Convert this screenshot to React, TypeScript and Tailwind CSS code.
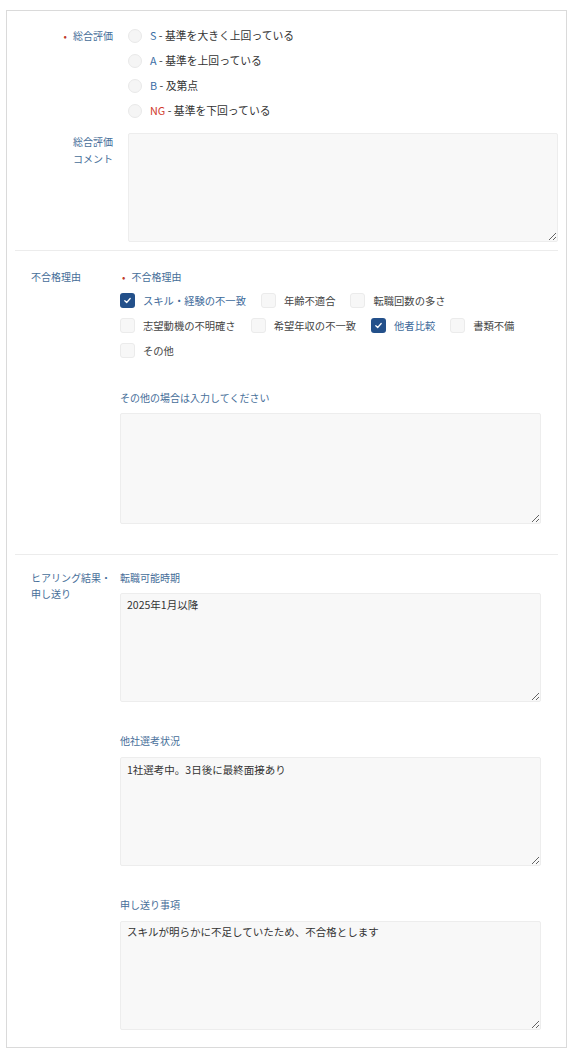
const FONT = "font-['Noto_Sans_CJK_JP','Noto_Sans',sans-serif]";

function Radio({ code, codeClass, text }: { code: string; codeClass: string; text: string }) {
  return (
    <div className="flex h-[25px] items-center">
      <span className="h-[14px] w-[14px] rounded-full border border-[#e9e9e9] bg-[#f5f5f5]" />
      <span className="ml-[8px] text-[10.8px] text-[#333]">
        <span className={codeClass}>{code}</span> - {text}
      </span>
    </div>
  );
}

function Check({ label, checked = false }: { label: string; checked?: boolean }) {
  return (
    <div className="mr-[15px] flex h-[25px] items-center">
      {checked ? (
        <span className="flex h-[15px] w-[15px] items-center justify-center rounded-[3px] bg-[#23508a]">
          <svg width="9" height="9" viewBox="0 0 10 10" fill="none">
            <path d="M2 5.2 L4.1 7.2 L8 2.8" stroke="white" strokeWidth="1.4" strokeLinecap="round" strokeLinejoin="round" />
          </svg>
        </span>
      ) : (
        <span className="h-[15px] w-[15px] rounded-[3px] border border-[#ebebeb] bg-[#f7f7f7]" />
      )}
      <span className={`ml-[8px] text-[10.3px] ${checked ? "text-[#3d6a9a]" : "text-[#444]"}`}>{label}</span>
    </div>
  );
}

function Area({ value = "", h, pt = "pt-[3px]" }: { value?: string; h: string; pt?: string }) {
  return (
    <textarea
      readOnly
      defaultValue={value}
      className={`block w-full ${h} rounded-[2px] border border-[#ededed] bg-[#f8f8f8] px-[6px] ${pt} text-[10.5px] leading-[16px] text-[#333] outline-none`}
    />
  );
}

function FieldLabel({ children }: { children: React.ReactNode }) {
  return <div className="h-[16px] text-[10px] leading-[16px] text-[#466e99]">{children}</div>;
}

export default function App() {
  return (
    <div className={`min-h-[1060px] bg-white ${FONT}`}>
      <div className="ml-[6px] mt-[10px] w-[561px] border border-[#dadada] bg-white px-[8px] pb-[17px]">
        {/* 総合評価 */}
        <div className="pt-[12px]">
          <div className="flex">
            <div className="w-[98px] pt-[4px] text-right text-[10px] leading-[17px] text-[#466e99]">
              <span className="mr-[6px] text-[#c0392b]">•</span>総合評価
            </div>
            <div className="ml-[15px]">
              <Radio code="S" codeClass="text-[#3b6ea5]" text="基準を大きく上回っている" />
              <Radio code="A" codeClass="text-[#3b6ea5]" text="基準を上回っている" />
              <Radio code="B" codeClass="text-[#3b6ea5]" text="及第点" />
              <Radio code="NG" codeClass="text-[#d0392b]" text="基準を下回っている" />
            </div>
          </div>
          <div className="mt-[10px] flex">
            <div className="w-[98px] text-right text-[10px] leading-[17px] text-[#466e99]">
              総合評価
              <br />
              コメント
            </div>
            <div className="ml-[15px] flex-1">
              <Area h="h-[109px]" />
            </div>
          </div>
        </div>

        <div className="mt-[8px] h-px bg-[#ececec]" />

        {/* 不合格理由 */}
        <div className="flex pb-[30px] pl-[16px] pr-[17px] pt-[13px]">
          <div className="w-[89px] pt-[4px] text-[10px] leading-[17px] text-[#466e99]">不合格理由</div>
          <div className="flex-1">
            <div className="flex h-[24px] items-center text-[10px] text-[#466e99]">
              <span className="ml-[2px] mr-[6px] text-[#c0392b]">•</span>不合格理由
            </div>
            <div className="flex flex-wrap">
              <Check label="スキル・経験の不一致" checked />
              <Check label="年齢不適合" />
              <Check label="転職回数の多さ" />
            </div>
            <div className="flex flex-wrap">
              <Check label="志望動機の不明確さ" />
              <Check label="希望年収の不一致" />
              <Check label="他者比較" checked />
              <Check label="書類不備" />
            </div>
            <Check label="その他" />
            <div className="mt-[27px]">
              <FieldLabel>その他の場合は入力してください</FieldLabel>
              <div className="mt-[7px]">
                <Area h="h-[111px]" />
              </div>
            </div>
          </div>
        </div>

        <div className="h-px bg-[#ececec]" />

        {/* ヒアリング結果 */}
        <div className="flex pl-[16px] pr-[17px] pt-[15px]">
          <div className="w-[89px] text-[10px] leading-[16px] text-[#466e99]">
            ヒアリング結果・
            <br />
            申し送り
          </div>
          <div className="flex-1">
            <FieldLabel>転職可能時期</FieldLabel>
            <div className="mt-[7px]">
              <Area h="h-[109px]" value="2025年1月以降" />
            </div>
            <div className="mt-[31px]">
              <FieldLabel>他社選考状況</FieldLabel>
            </div>
            <div className="mt-[8px]">
              <Area h="h-[109px]" value="1社選考中。3日後に最終面接あり" pt="pt-[4px]" />
            </div>
            <div className="mt-[31px]">
              <FieldLabel>申し送り事項</FieldLabel>
            </div>
            <div className="mt-[8px]">
              <Area h="h-[109px]" value="スキルが明らかに不足していたため、不合格とします" pt="pt-[2px]" />
            </div>
          </div>
        </div>
      </div>
    </div>
  );
}
